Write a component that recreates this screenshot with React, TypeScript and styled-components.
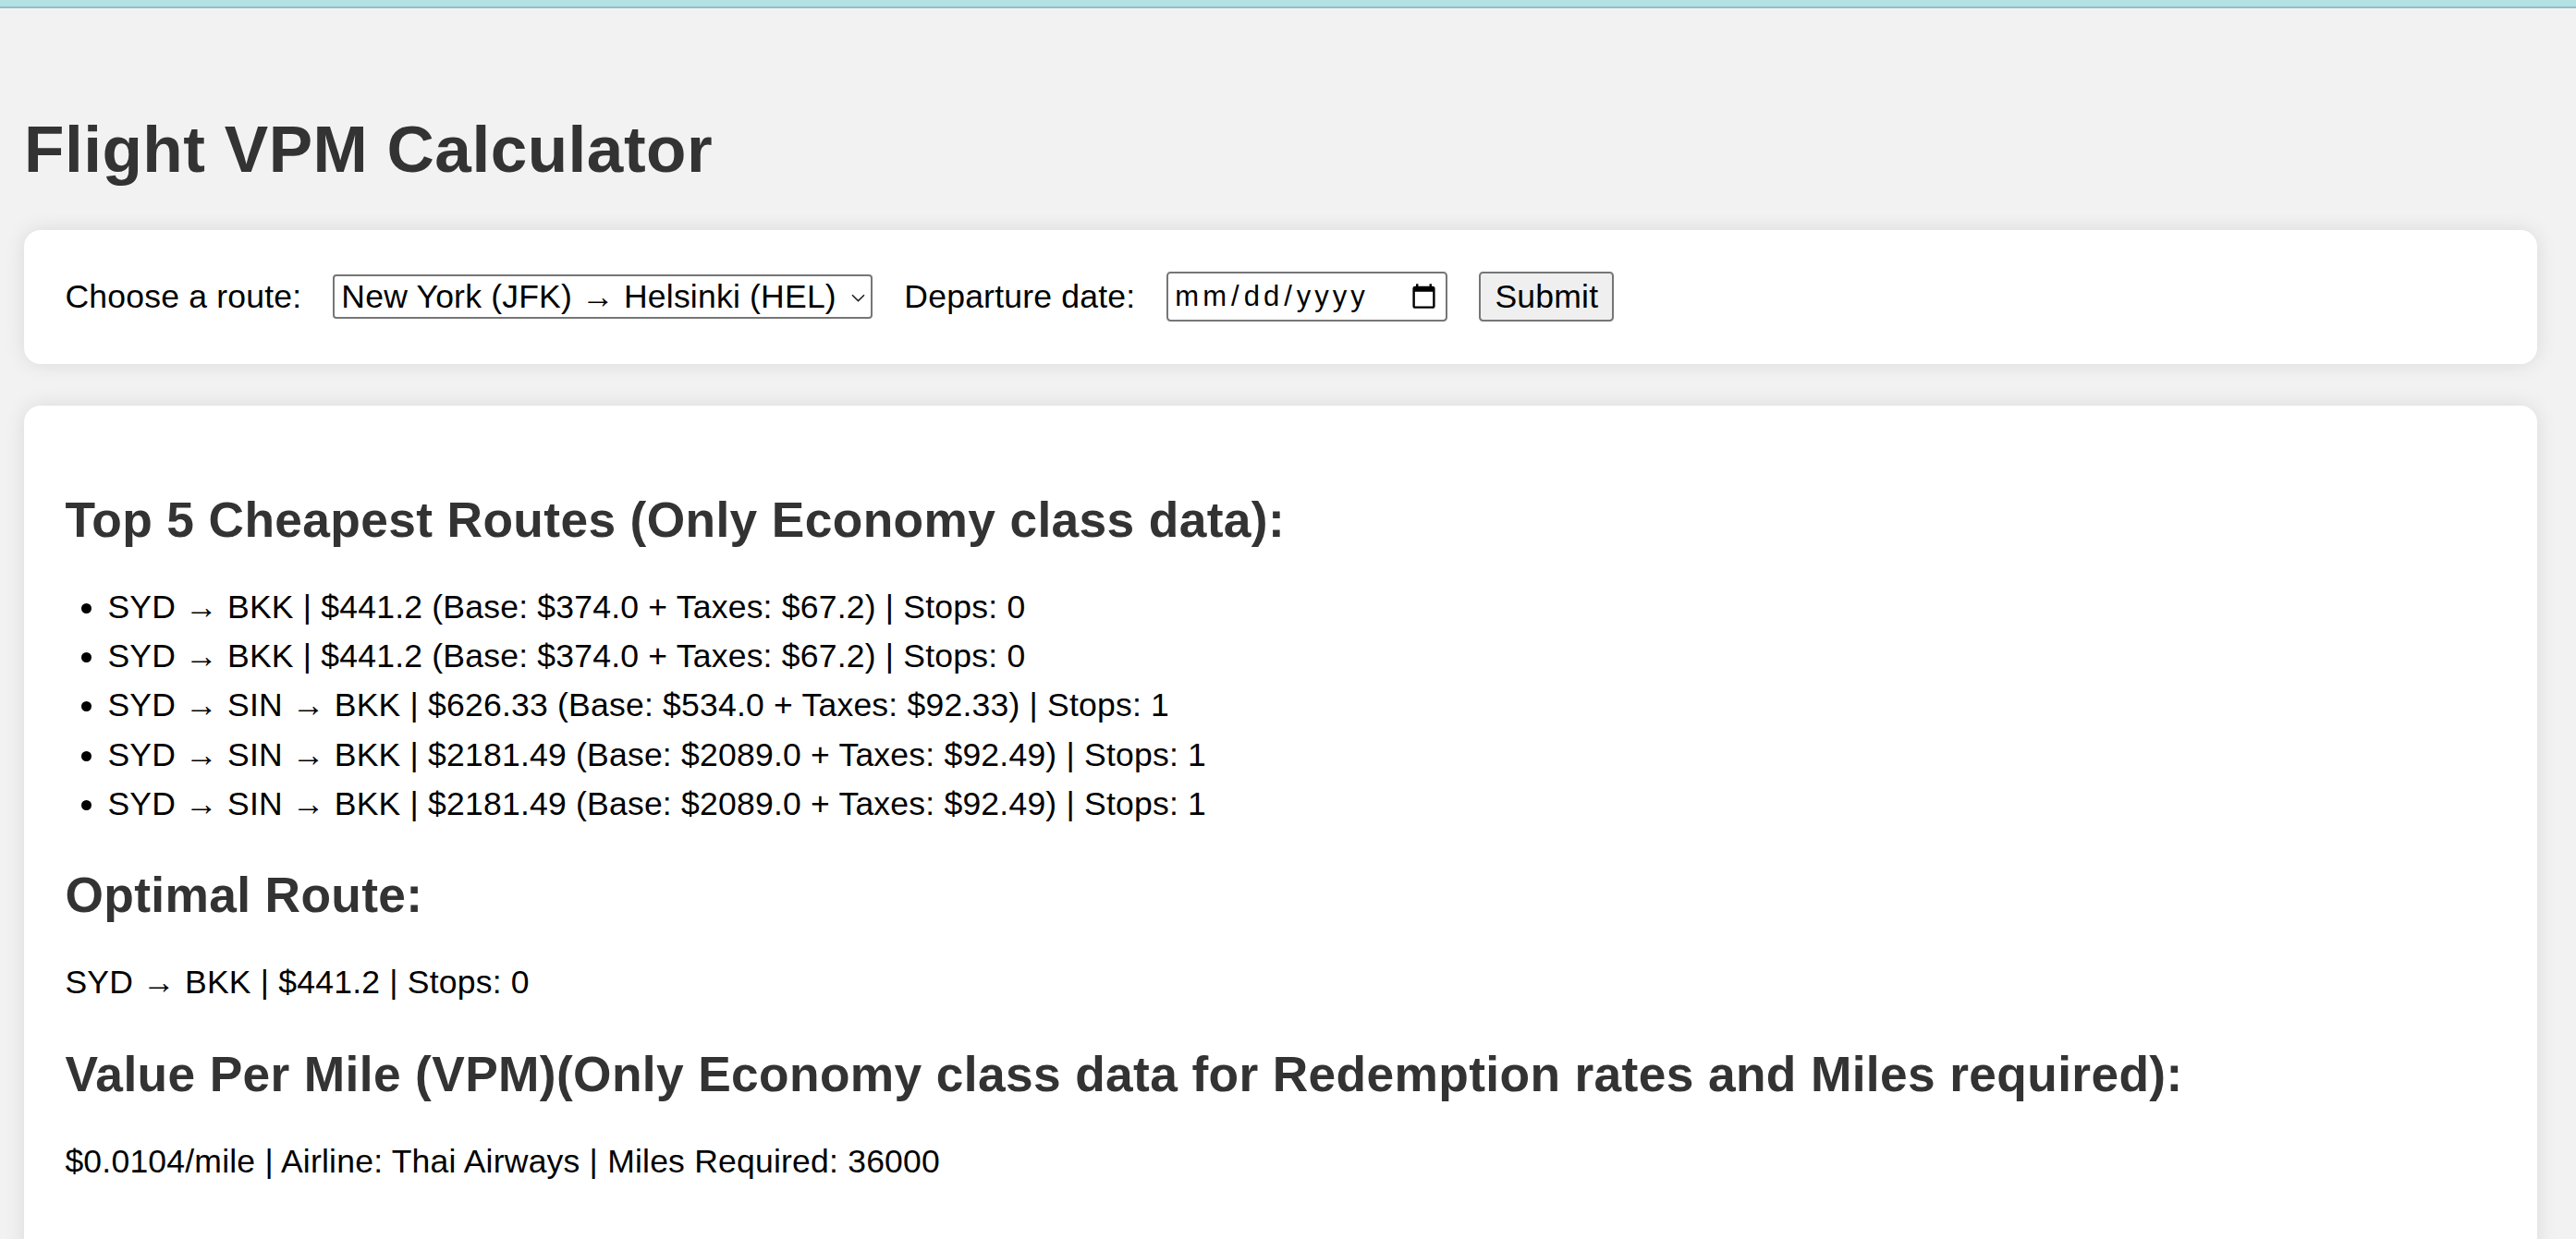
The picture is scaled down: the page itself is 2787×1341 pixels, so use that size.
import React from "react";
import styled, { createGlobalStyle } from "styled-components";

const GlobalStyle = createGlobalStyle`
  html, body {
    margin: 0;
    padding: 0;
    background: #f2f2f2;
    overflow: hidden;
  }
  body {
    font-family: "Liberation Sans", Arial, Helvetica, sans-serif;
    font-size: 35.56px;
    letter-spacing: 0.2px;
    color: #000;
  }
`;

const TopBar = styled.div`
  height: 7px;
  background: #b4e1e4;
  border-bottom: 2px solid #93bfc3;
`;

const Page = styled.main`
  padding: 0 42px 40px 26px;
`;

const Title = styled.h1`
  margin: 111.6px 0 47.7px;
  font-size: 71.1px;
  font-weight: 700;
  line-height: normal;
  letter-spacing: 0.5px;
  color: #333;
`;

const Card = styled.section<{ $gapTop?: number }>`
  background: #fff;
  border-radius: 18px;
  box-shadow: 0 0 22px rgba(0, 0, 0, 0.1);
  padding: 44.4px;
  margin-top: ${(p) => p.$gapTop ?? 0}px;
`;

const FormRow = styled.form`
  display: flex;
  align-items: center;
  gap: 34px;
  min-height: 55.5px;
`;

const Label = styled.label`
  font-size: 35.56px;
  line-height: normal;
  color: #000;
  white-space: nowrap;
`;

const SelectWrap = styled.div`
  position: relative;
  display: inline-flex;
`;

const Select = styled.select`
  appearance: none;
  -webkit-appearance: none;
  box-sizing: border-box;
  width: 584px;
  height: 48px;
  padding: 0 34px 0 7px;
  border: 2.2px solid #767676;
  border-radius: 4px;
  background: #fff;
  color: #000;
  font-family: inherit;
  font-size: 35.56px;
  letter-spacing: 0.2px;
`;

const Chevron = styled.svg`
  position: absolute;
  right: 8px;
  top: 50%;
  width: 15px;
  height: 9px;
  margin-top: -3px;
  pointer-events: none;
`;

const DateInput = styled.input`
  box-sizing: border-box;
  width: 304px;
  height: 54px;
  padding: 0 6px;
  border: 2.2px solid #767676;
  border-radius: 4.4px;
  background: #fff;
  color: #000;
  font-family: inherit;
  font-size: 31px;
  letter-spacing: 4px;
`;

const SubmitButton = styled.button`
  box-sizing: border-box;
  height: 54px;
  width: 146px;
  padding: 0 14px;
  border: 2.2px solid #767676;
  border-radius: 4.4px;
  background: #efefef;
  color: #000;
  font-family: inherit;
  font-size: 35.56px;
  letter-spacing: 0.2px;
`;

const SectionTitle = styled.h2<{ $first?: boolean }>`
  margin: ${(p) => (p.$first ? 48.2 : 41)}px 0 38px;
  font-size: 53.33px;
  font-weight: 700;
  line-height: normal;
  letter-spacing: 0.35px;
  color: #333;
`;

const RouteList = styled.ul`
  margin: 0;
  padding-left: 46px;
  font-size: 35.56px;
  line-height: 53.33px;
  list-style: disc outside;
`;

const RouteItem = styled.li`
  color: #000;
`;

const Result = styled.p`
  margin: 0 0 36px;
  font-size: 35.56px;
  line-height: 53.33px;
  color: #000;
`;

type Route = {
  path: string[];
  total: string;
  base: string;
  taxes: string;
  stops: number;
};

const routes: Route[] = [
  { path: ["SYD", "BKK"], total: "441.2", base: "374.0", taxes: "67.2", stops: 0 },
  { path: ["SYD", "BKK"], total: "441.2", base: "374.0", taxes: "67.2", stops: 0 },
  { path: ["SYD", "SIN", "BKK"], total: "626.33", base: "534.0", taxes: "92.33", stops: 1 },
  { path: ["SYD", "SIN", "BKK"], total: "2181.49", base: "2089.0", taxes: "92.49", stops: 1 },
  { path: ["SYD", "SIN", "BKK"], total: "2181.49", base: "2089.0", taxes: "92.49", stops: 1 },
];

export default function App() {
  return (
    <>
      <GlobalStyle />
      <TopBar />
      <Page>
        <Title>Flight VPM Calculator</Title>
        <Card>
          <FormRow onSubmit={(e) => e.preventDefault()}>
            <Label htmlFor="route">Choose a route:</Label>
            <SelectWrap>
              <Select id="route" defaultValue="JFK-HEL">
                <option value="JFK-HEL">New York (JFK) → Helsinki (HEL)</option>
                <option value="SYD-BKK">Sydney (SYD) → Bangkok (BKK)</option>
              </Select>
              <Chevron viewBox="0 0 15 9" fill="none">
                <path d="M1 1.2 L7.5 7.6 L14 1.2" stroke="#222" strokeWidth="1.6" />
              </Chevron>
            </SelectWrap>
            <Label htmlFor="date">Departure date:</Label>
            <DateInput id="date" type="date" />
            <SubmitButton type="submit">Submit</SubmitButton>
          </FormRow>
        </Card>
        <Card $gapTop={45.7}>
          <SectionTitle $first>Top 5 Cheapest Routes (Only Economy class data):</SectionTitle>
          <RouteList>
            {routes.map((r, i) => (
              <RouteItem key={i}>
                {r.path.join(" → ")} | ${r.total} (Base: ${r.base} + Taxes: ${r.taxes}) | Stops: {r.stops}
              </RouteItem>
            ))}
          </RouteList>
          <SectionTitle>Optimal Route:</SectionTitle>
          <Result>SYD → BKK | $441.2 | Stops: 0</Result>
          <SectionTitle>
            Value Per Mile (VPM)(Only Economy class data for Redemption rates and Miles required):
          </SectionTitle>
          <Result>$0.0104/mile | Airline: Thai Airways | Miles Required: 36000</Result>
        </Card>
      </Page>
    </>
  );
}
